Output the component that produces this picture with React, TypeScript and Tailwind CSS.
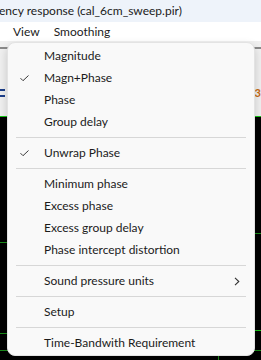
import React from "react";

type Entry =
  | { kind: "item"; label: string; checked?: boolean; submenu?: boolean }
  | { kind: "sep" };

const entries: Entry[] = [
  { kind: "item", label: "Magnitude" },
  { kind: "item", label: "Magn+Phase", checked: true },
  { kind: "item", label: "Phase" },
  { kind: "item", label: "Group delay" },
  { kind: "sep" },
  { kind: "item", label: "Unwrap Phase", checked: true },
  { kind: "sep" },
  { kind: "item", label: "Minimum phase" },
  { kind: "item", label: "Excess phase" },
  { kind: "item", label: "Excess group delay" },
  { kind: "item", label: "Phase intercept distortion" },
  { kind: "sep" },
  { kind: "item", label: "Sound pressure units", submenu: true },
  { kind: "sep" },
  { kind: "item", label: "Setup" },
  { kind: "sep" },
  { kind: "item", label: "Time-Bandwith Requirement" },
];

const Check = () => (
  <svg width="9" height="7" viewBox="0 0 9 7" fill="none">
    <path d="M0.5 3.2 L3 5.7 L8.5 0.5" stroke="#3a3a3a" strokeWidth="1" />
  </svg>
);

const Chevron = () => (
  <svg width="6" height="9" viewBox="0 0 6 9" fill="none">
    <path d="M1 0.8 L4.8 4.5 L1 8.2" stroke="#333" strokeWidth="1.1" />
  </svg>
);

// plot behind the menu, only the edges show
const Plot = () => (
  <svg width="261" height="250" className="block">
    <rect width="261" height="250" fill="#000" />
    <line x1="0" y1="0.5" x2="261" y2="0.5" stroke="#19c819" />
    <line x1="0" y1="126.5" x2="8" y2="126.5" stroke="#1a8c1a" />
    <line x1="0" y1="217.5" x2="8" y2="217.5" stroke="#1a8c1a" />
    <line x1="0" y1="234.5" x2="8" y2="234.5" stroke="#1a8c1a" />
    <line x1="252" y1="117.5" x2="261" y2="117.5" stroke="#1a8c1a" />
    <line x1="252" y1="214.5" x2="261" y2="214.5" stroke="#19c819" />
    <line x1="252" y1="234.5" x2="261" y2="234.5" stroke="#1a8c1a" />
    <line x1="218.5" y1="240" x2="218.5" y2="250" stroke="#1a8c1a" />
  </svg>
);

export default function App() {
  return (
    <div
      className="relative h-[360px] w-[261px] overflow-hidden bg-[#f0f0f0] text-[12px] text-[#1b1b1b]"
      style={{ fontFamily: "Lato, 'Noto Sans', sans-serif" }}
    >
      <div className="flex h-[22px] items-center bg-[#eef3fa]">
        <span className="-ml-[1px] whitespace-nowrap">
          ency response (cal_6cm_sweep.pir)
        </span>
      </div>
      <div className="flex h-[19px] items-center gap-[14px] bg-white pl-[13px]">
        <span>View</span>
        <span>Smoothing</span>
      </div>
      <div className="relative h-[69px] bg-[#f0f0f0]">
        <div className="mt-[6px] h-[2px] bg-[#8a8a8a]" />
        <div className="absolute left-0 top-[42px] h-[2px] w-[5px] bg-[#1d3f8a]" />
        <div className="absolute left-0 top-[48px] h-[2px] w-[5px] bg-[#1d3f8a]" />
        <div className="absolute right-0 top-[38px] text-[11px] font-bold text-[#c76a12]">3</div>
      </div>
      <Plot />

      {/* popup menu */}
      <div className="absolute left-[7px] top-[42px] w-[248px] rounded-[8px] border border-[#e3e3e3] bg-[#f9f9f9] pt-[2px] pb-[1px] shadow-[0_4px_10px_rgba(0,0,0,0.18)]">
        {entries.map((e, i) =>
          e.kind === "sep" ? (
            <div key={i} className="flex h-[9px] items-center px-[8px]">
              <div className="h-px w-full bg-[#d7d7d7]" />
            </div>
          ) : (
            <div key={i} className="relative flex h-[22px] items-center pl-[36px] pr-[14px]">
              {e.checked && (
                <span className="absolute left-[12px] top-[8px] flex">
                  <Check />
                </span>
              )}
              <span className="flex-1 whitespace-nowrap">{e.label}</span>
              {e.submenu && <Chevron />}
            </div>
          )
        )}
      </div>
    </div>
  );
}
